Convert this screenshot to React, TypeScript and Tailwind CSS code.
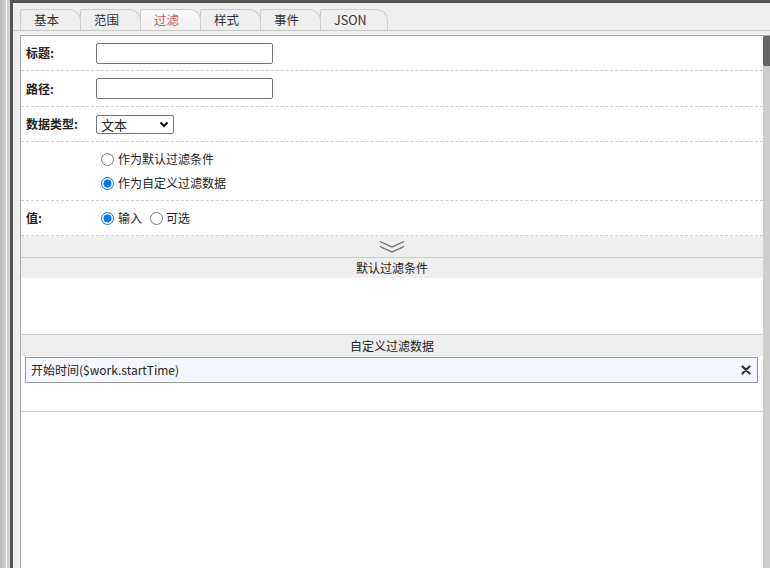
import React from 'react';

const tabs = ['基本', '范围', '过滤', '样式', '事件', 'JSON'];

function Row({ label, children, className = '' }: { label?: string; children?: React.ReactNode; className?: string }) {
  return (
    <div className={`flex border-b border-dashed border-[#cfcfcf] ${className}`}>
      <div className="w-[75px] shrink-0 pl-[5px] font-bold text-[12px] text-[#222] flex items-center">{label}</div>
      <div className="flex-1 flex items-center">{children}</div>
    </div>
  );
}

function Chevrons() {
  return (
    <svg width="26" height="14" viewBox="0 0 26 14" fill="none" stroke="#666" strokeWidth="1.2">
      <path d="M1 1.5 L13 7 L25 1.5" />
      <path d="M1 6.5 L13 12 L25 6.5" />
    </svg>
  );
}

export default function App() {
  return (
    <div
      className="w-[770px] h-[568px] flex overflow-hidden text-[#222]"
      style={{ fontFamily: '"Noto Sans CJK SC", "Noto Sans", sans-serif' }}
    >
      {/* outer window edges */}
      <div className="w-[6px] shrink-0 bg-gradient-to-r from-[#b8b8b8] to-[#d6d6d6]" />
      <div className="w-[1px] shrink-0 bg-white" />
      <div className="w-[3px] shrink-0 bg-[#d4d4d4]" />
      <div className="flex-1 flex flex-col border-l-[3px] border-t-[3px] border-[#555] bg-[#eeeeee] min-w-0">
        {/* tab strip */}
        <div className="h-[28px] shrink-0 flex items-end pl-[7px] border-b border-[#c8c8c8]">
          <div className="flex items-end">
            {tabs.map((t, i) => (
              <div
                key={t}
                className={`h-[21px] ${i === 5 ? 'w-[68px]' : 'w-[61px]'} -mr-px pl-[13px] text-[12.5px] leading-[20px] border border-b-0 border-[#cccccc] rounded-tl-[3px] rounded-tr-[12px] ${
                  i === 2 ? 'bg-gradient-to-b from-[#fbfbfb] to-[#efefef] text-[#cc5a5a]' : 'bg-[#eeeeee] text-[#333]'
                }`}
              >
                {t}
              </div>
            ))}
          </div>
        </div>
        <div className="h-[4px] shrink-0" />
        {/* panel */}
        <div className="flex-1 flex ml-[7px] border-l border-t border-[#a8a8a8] bg-white min-h-0">
          <div className="flex-1 flex flex-col min-w-0">
            <Row label="标题:" className="h-[35px]">
              <input className="w-[177px] h-[21px] border border-[#767676] rounded-[2px] bg-white" />
            </Row>
            <Row label="路径:" className="h-[36px]">
              <input className="w-[177px] h-[21px] border border-[#767676] rounded-[2px] bg-white" />
            </Row>
            <Row label="数据类型:" className="h-[35px]">
              <div className="w-[78px] h-[19px] border border-[#767676] rounded-[2px] flex items-center justify-between px-[4px] text-[13px] leading-none">
                <span>文本</span>
                <svg width="10" height="7" viewBox="0 0 10 7" fill="none" stroke="#111" strokeWidth="2">
                  <path d="M1.5 1.5 L5 5 L8.5 1.5" />
                </svg>
              </div>
            </Row>
            <Row className="h-[59px]">
              <div className="flex flex-col gap-[10px] pl-[5px] text-[12px]">
                <label className="flex items-center gap-[4px] leading-[14px]">
                  <input type="radio" name="mode" className="w-[13px] h-[13px] m-0" />
                  作为默认过滤条件
                </label>
                <label className="flex items-center gap-[4px] leading-[14px]">
                  <input type="radio" name="mode" defaultChecked className="w-[13px] h-[13px] m-0" />
                  作为自定义过滤数据
                </label>
              </div>
            </Row>
            <Row label="值:" className="h-[35px]">
              <div className="flex items-center pl-[5px] text-[12px]">
                <label className="flex items-center gap-[4px]">
                  <input type="radio" name="val" defaultChecked className="w-[13px] h-[13px] m-0" />
                  输入
                </label>
                <label className="flex items-center gap-[3px] ml-[8px]">
                  <input type="radio" name="val" className="w-[13px] h-[13px] m-0" />
                  可选
                </label>
              </div>
            </Row>
            <div className="h-[22px] shrink-0 bg-[#eeeeee] border-b border-[#cccccc] flex items-center justify-center">
              <Chevrons />
            </div>
            <div className="h-[20px] shrink-0 bg-[#eeeeee] text-[12px] text-[#222] flex items-center justify-center">默认过滤条件</div>
            <div className="h-[57px] shrink-0 border-b border-[#cccccc]" />
            <div className="h-[21px] shrink-0 bg-[#eeeeee] text-[12px] text-[#222] flex items-center justify-center">自定义过滤数据</div>
            <div className="h-[56px] shrink-0 border-b border-[#cccccc] pt-[1px] pl-[4px] pr-[5px]">
              <div className="h-[26px] border border-[#9a9a9a] bg-[#f4f7fe] flex items-center justify-between pl-[5px] pr-[6px] text-[12px] text-[#222]">
                <span>开始时间($work.startTime)</span>
                <svg width="10" height="10" viewBox="0 0 10 10" stroke="#333" strokeWidth="2.2" strokeLinecap="round">
                  <path d="M1.5 1.5 L8.5 8.5 M8.5 1.5 L1.5 8.5" />
                </svg>
              </div>
            </div>
            <div className="flex-1" />
          </div>
          {/* scrollbar */}
          <div className="w-[7px] shrink-0 bg-[#cdcdcd] flex flex-col">
            <div className="h-[30px] bg-[#666] rounded-l-[2px]" />
          </div>
        </div>
      </div>
    </div>
  );
}
